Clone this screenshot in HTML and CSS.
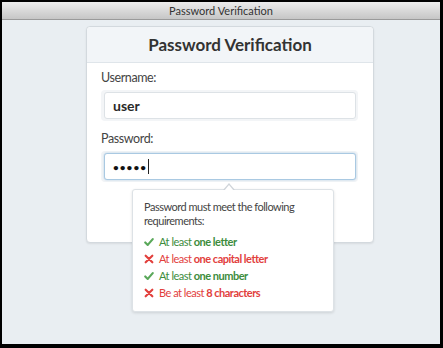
FILE: index.html
```html
<!DOCTYPE html>
<html lang="en">

<head>
    <meta charset="UTF-8">
    <meta name="viewport" content="width=device-width, initial-scale=1.0">
    <title>Password Verification</title>
    <link rel="stylesheet" href="styles.css">
</head>

<body>
    <div class="window">
        <!-- Title bar -->
        <div class="titlebar">Password Verification</div>

        <div class="content">
            <div class="card">
                <div class="card-header">Password Verification</div>
                <div class="card-body">
                    <label class="label">Username:</label>
                    <div class="field">
                        <div class="input">user</div>
                    </div>

                    <label class="label label-pass">Password:</label>
                    <div class="field">
                        <div class="input input-focus"><span class="dots">&#8226;&#8226;&#8226;&#8226;&#8226;</span><span class="caret"></span></div>
                    </div>
                </div>

                <!-- Requirements popover -->
                <div class="popover">
                    <p class="popover-title">Password must meet the following requirements:</p>
                    <ul class="rules">
                        <li class="rule ok"><svg class="icon" viewBox="0 0 12 12"><path d="M1.5 6.5 L4.5 9.5 L10.5 2.5" /></svg>At least <b>one letter</b></li>
                        <li class="rule bad"><svg class="icon" viewBox="0 0 12 12"><path d="M2 2 L10 10 M10 2 L2 10" /></svg>At least <b>one capital letter</b></li>
                        <li class="rule ok"><svg class="icon" viewBox="0 0 12 12"><path d="M1.5 6.5 L4.5 9.5 L10.5 2.5" /></svg>At least <b>one number</b></li>
                        <li class="rule bad"><svg class="icon" viewBox="0 0 12 12"><path d="M2 2 L10 10 M10 2 L2 10" /></svg>Be at least <b>8 characters</b></li>
                    </ul>
                </div>
            </div>
        </div>
    </div>
</body>

</html>
```

FILE: styles.css
```css
/* Page */
html,
body {
    margin: 0;
    padding: 0;
    background-color: #000;
}

body {
    font-family: "Lato", "Open Sans", sans-serif;
    color: #444;
}

/* Window frame */
.window {
    width: 443px;
    height: 348px;
    box-sizing: border-box;
    border-style: solid;
    border-color: #000;
    border-width: 2px 3px 4px 2px;
    background-color: #e9eef2;
    display: flex;
    flex-direction: column;
}

/* Title bar */
.titlebar {
    height: 17px;
    line-height: 17px;
    text-align: center;
    font-size: 11px;
    color: #333;
    background: linear-gradient(#ececec, #c6c6c6);
    border-bottom: 1px solid #9a9a9a;
}

/* Content */
.content {
    padding: 6px 0 0 84px;
}

/* Card */
.card {
    position: relative;
    width: 288px;
    height: 217px;
    box-sizing: border-box;
    background-color: #fff;
    border: 1px solid #d3d9de;
    border-radius: 4px;
    box-shadow: 0 1px 2px rgba(0, 0, 0, 0.08);
}

.card-header {
    height: 35px;
    line-height: 35px;
    text-align: center;
    font-size: 17px;
    font-weight: 700;
    color: #333;
    background-color: #f2f5f8;
    border-bottom: 1px solid #dfe5ea;
    border-radius: 4px 4px 0 0;
}

.card-body {
    padding: 6px 15px 0 14px;
}

/* Labels */
.label {
    display: block;
    font-size: 12.5px;
    line-height: 18px;
    letter-spacing: -0.4px;
    color: #444;
}

.label-pass {
    margin-top: 9px;
}

/* Inputs */
.field {
    margin-top: 3px;
    padding: 2px 2px 2px 3px;
    background-color: #f3f5f7;
    border-radius: 4px;
}

.input {
    height: 27px;
    box-sizing: border-box;
    display: flex;
    align-items: center;
    padding-left: 8px;
    background-color: #fff;
    border: 1px solid #dde2e6;
    border-radius: 3px;
    font-size: 14px;
    font-weight: 700;
    color: #2a2a2a;
}

.input-focus {
    border-color: #a9c9e2;
    box-shadow: 0 0 2px rgba(100, 160, 210, 0.5);
}

.dots {
    font-size: 10px;
    letter-spacing: 1px;
    color: #111;
}

.caret {
    display: inline-block;
    width: 1px;
    height: 15px;
    margin-left: 1px;
    background-color: #222;
}

/* Popover */
.popover {
    position: absolute;
    top: 162px;
    left: 45px;
    width: 202px;
    height: 123px;
    box-sizing: border-box;
    padding: 10px 12px 0 11px;
    background-color: #fff;
    border: 1px solid #dde2e6;
    border-radius: 3px;
    box-shadow: 0 1px 3px rgba(0, 0, 0, 0.12);
    letter-spacing: -0.5px;
}

.popover::before {
    content: "";
    position: absolute;
    top: -7px;
    left: 90px;
    border-style: solid;
    border-width: 0 6px 7px 6px;
    border-color: transparent transparent #d0d5da transparent;
}

.popover::after {
    content: "";
    position: absolute;
    top: -5px;
    left: 91px;
    border-style: solid;
    border-width: 0 5px 6px 5px;
    border-color: transparent transparent #fff transparent;
}

.popover-title {
    margin: 0;
    font-size: 11px;
    line-height: 14px;
    color: #444;
}

/* Requirement list */
.rules {
    list-style: none;
    margin: 5px 0 0 0;
    padding: 0;
}

.rule {
    height: 17px;
    line-height: 17px;
    font-size: 11px;
}

.rule b {
    font-weight: 700;
}

.icon {
    width: 10px;
    height: 10px;
    margin-right: 5px;
    vertical-align: -1px;
    fill: none;
    stroke-width: 2.6;
    stroke-linecap: round;
    stroke-linejoin: round;
}

.ok {
    color: #3d8c3d;
}

.ok .icon {
    stroke: #5aa85a;
}

.bad {
    color: #e2403d;
}

.bad .icon {
    stroke: #e2403d;
}
```
